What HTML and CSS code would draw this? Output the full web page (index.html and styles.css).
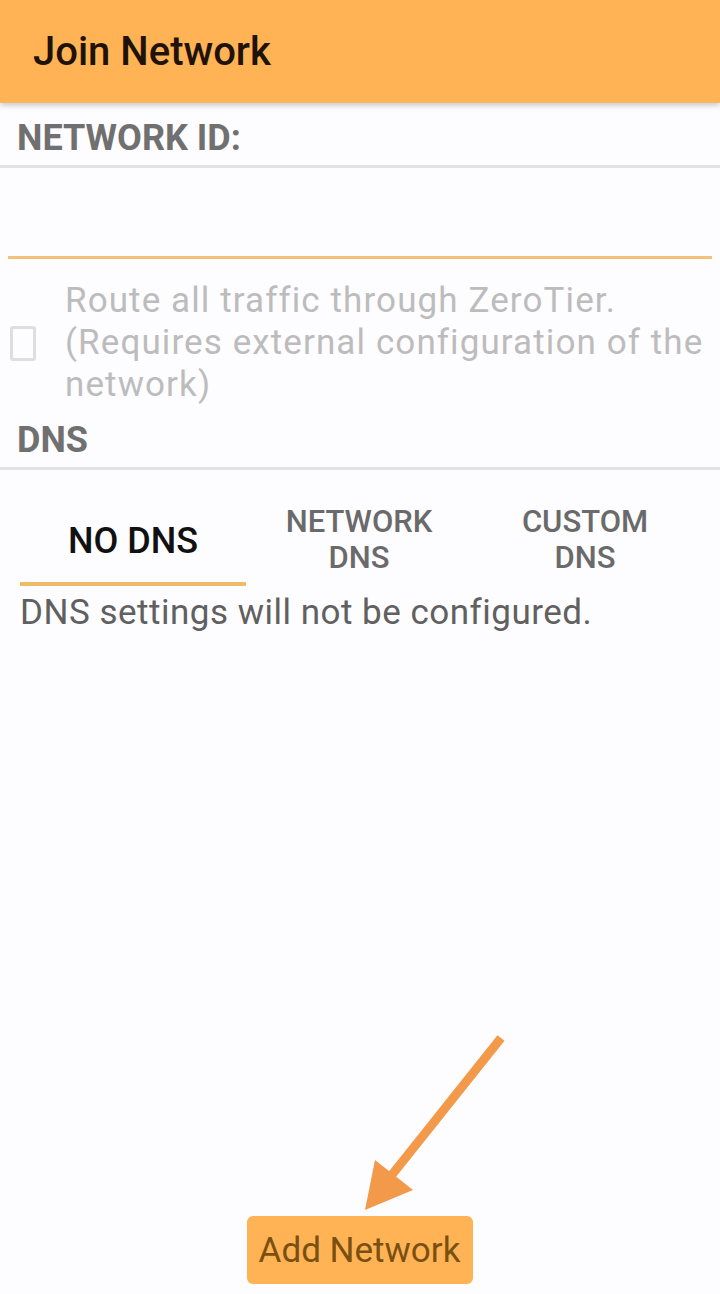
FILE: index.html
```html
<!DOCTYPE html>
<html>
<head>
    <title>Join Network</title>
    <link rel="stylesheet" href="styles.css">
</head>
<body>
    <div class="screen">
        <div class="toolbar">
            <h1>Join Network</h1>
        </div>
        <div class="section-label">NETWORK ID:</div>
        <div class="id-input"></div>
        <label class="route-option">
            <span class="checkbox"></span>
            <span class="route-text">Route all traffic through ZeroTier.<br>(Requires external configuration of the network)</span>
        </label>
        <div class="section-label dns-label">DNS</div>
        <div class="tabs">
            <div class="tab active">NO DNS</div>
            <div class="tab">NETWORK<br>DNS</div>
            <div class="tab">CUSTOM<br>DNS</div>
        </div>
        <p class="dns-note">DNS settings will not be configured.</p>
        <div class="footer">
            <button class="add-btn">Add Network</button>
            <!-- annotation arrow pointing at the button -->
            <svg class="pointer" width="160" height="190" viewBox="0 0 160 190">
                <line x1="146" y1="6" x2="36" y2="144" stroke="#f3994a" stroke-width="9"/>
                <polygon points="10,178 20,128 58,158" fill="#f3994a"/>
            </svg>
        </div>
    </div>
</body>
</html>
```

FILE: styles.css
```css
body {
    margin: 0;
    padding: 0;
    font-family: Roboto, "Noto Sans", sans-serif;
    background-color: #fdfcfe;
}
.screen {
    display: flex;
    flex-direction: column;
    min-height: 100vh;
}
.toolbar {
    height: 103px;
    background-color: #ffb354;
    box-shadow: 0 3px 5px rgba(0, 0, 0, 0.18);
    display: flex;
    align-items: center;
    padding-left: 33px;
}
.toolbar h1 {
    margin: 0;
    font-size: 40px;
    font-weight: 500;
    color: #1e120a;
}
.section-label {
    font-size: 36px;
    font-weight: 700;
    color: #707070;
    padding: 14px 17px 0;
    height: 48px;
    line-height: 42px;
    border-bottom: 3px solid #e2e2e2;
}
.id-input {
    height: 88px;
    margin: 0 8px;
    border-bottom: 3px solid #f2c07a;
}
.route-option {
    display: flex;
    align-items: center;
    padding: 21px 4px 0 10px;
}
.checkbox {
    flex: none;
    width: 20px;
    height: 29px;
    border: 3px solid #dedede;
    border-radius: 3px;
    margin-right: 29px;
}
.route-text {
    font-size: 35px;
    letter-spacing: 1.1px;
    line-height: 42px;
    color: #bcbcbc;
}
.dns-label {
    padding-top: 13px;
}
.tabs {
    display: flex;
    margin: 23px 20px 0;
}
.tab {
    width: 226px;
    height: 93px;
    display: flex;
    align-items: center;
    justify-content: center;
    text-align: center;
    font-size: 31px;
    font-weight: 500;
    line-height: 36px;
    color: #6a6a6a;
    box-sizing: border-box;
}
.tab.active {
    font-size: 36px;
    color: #111;
    border-bottom: 4px solid #efbb66;
    padding-top: 7px;
}
.dns-note {
    margin: 6px 20px 0;
    font-size: 35px;
    letter-spacing: 0.5px;
    color: #606060;
}
.footer {
    margin-top: auto;
    position: relative;
    display: flex;
    justify-content: center;
    padding-bottom: 10px;
}
.add-btn {
    width: 226px;
    height: 68px;
    margin-left: -1px;
    border: none;
    border-radius: 6px;
    background-color: #ffb354;
    color: #7a4f12;
    font-family: Roboto, "Noto Sans", sans-serif;
    font-size: 35px;
}
.pointer {
    position: absolute;
    left: 355px;
    bottom: 72px;
}
```
